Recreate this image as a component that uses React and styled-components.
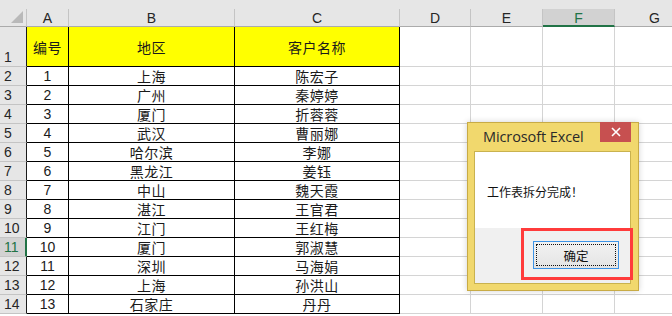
import React from "react";
import styled, { createGlobalStyle, css } from "styled-components";

const GlobalStyle = createGlobalStyle`
  html, body {
    margin: 0;
    padding: 0;
    background: #ffffff;
  }
  body {
    font-family: "Liberation Sans", "Noto Sans CJK SC", sans-serif;
  }
`;

const Page = styled.div`
  position: relative;
  width: 672px;
  height: 316px;
  overflow: hidden;
  background: #ffffff;
`;

const Sheet = styled.div`
  display: grid;
  grid-template-columns: 27px 42px 166px 165px 71px 72px 72px 80px;
  grid-template-rows: 9px 18px 40px repeat(13, 19px);
`;

const TopStrip = styled.div`
  grid-column: 1 / -1;
  background: #e6e6e6;
`;

const Corner = styled.div`
  position: relative;
  background: #e6e6e6;
  border-right: 1px solid #c4c4c4;
  border-bottom: 1px solid #ababab;
  box-sizing: border-box;

  &::after {
    content: "";
    position: absolute;
    right: 3px;
    bottom: 3px;
    width: 12px;
    height: 12px;
    background: #b9b9b9;
    clip-path: polygon(100% 0, 100% 100%, 0 100%);
  }
`;

const ColHeader = styled.div`
  box-sizing: border-box;
  background: ${(p) => (p.$selected ? "#d2d2d2" : "#e6e6e6")};
  border-right: 1px solid #c4c4c4;
  border-bottom: ${(p) => (p.$selected ? "2px solid #217346" : "1px solid #ababab")};
  color: ${(p) => (p.$selected ? "#217346" : "#262626")};
  font-size: 14px;
  display: flex;
  align-items: center;
  justify-content: center;
  line-height: 1;
  padding-top: 1px;
`;

const RowHeader = styled.div`
  box-sizing: border-box;
  background: ${(p) => (p.$selected ? "#d2d2d2" : "#e6e6e6")};
  border-bottom: 1px solid #c4c4c4;
  border-right: ${(p) => (p.$selected ? "2px solid #217346" : "1px solid #1a1a1a")};
  color: ${(p) => (p.$selected ? "#217346" : "#262626")};
  font-size: 14px;
  display: flex;
  align-items: ${(p) => (p.$tall ? "flex-end" : "center")};
  padding-left: 4px;
  padding-bottom: ${(p) => (p.$tall ? "2px" : "0")};
  line-height: 1;
`;

const Cell = styled.div`
  box-sizing: border-box;
  display: flex;
  align-items: center;
  justify-content: center;
  font-size: 14px;
  line-height: 1;
  color: #1a1a1a;
  white-space: nowrap;
  ${(p) =>
    p.$table
      ? css`
          border-right: 1px solid #000;
          border-bottom: 1px solid #000;
        `
      : css`
          border-right: 1px solid #d4d4d4;
          border-bottom: 1px solid #d4d4d4;
        `}
  ${(p) =>
    p.$head &&
    css`
      background: #ffff00;
    `}
`;

const CjkText = styled.span`
  font-family: "Noto Sans CJK SC", sans-serif;
  font-size: 14px;
  letter-spacing: 0.5px;
`;

const Dialog = styled.div`
  position: absolute;
  left: 467px;
  top: 122px;
  width: 172px;
  height: 169px;
  box-sizing: border-box;
  background: #f1d86d;
  border: 1px solid #c8ab45;
  box-shadow: 0 0 6px rgba(0, 0, 0, 0.18);
  display: flex;
  flex-direction: column;
  padding: 0 7px 6px 6px;
`;

const TitleBar = styled.div`
  height: 28px;
  display: flex;
  align-items: flex-start;
  justify-content: space-between;
`;

const Title = styled.div`
  font-family: "Open Sans", "Liberation Sans", sans-serif;
  font-size: 14.5px;
  color: #2a2a2a;
  padding: 4px 0 0 9px;
  letter-spacing: -0.1px;
`;

const CloseButton = styled.div`
  width: 31px;
  height: 20px;
  background: #c75050;
  display: flex;
  align-items: center;
  justify-content: center;
  margin-top: -1px;
  margin-right: 0px;
`;

const Inner = styled.div`
  flex: 1;
  display: flex;
  flex-direction: column;
  border: 1px solid #c9b24f;
  background: #f0f0f0;
`;

const Message = styled.div`
  height: 76px;
  background: #ffffff;
  display: flex;
  align-items: center;
  padding: 0 0 0 12px;
  font-family: "Noto Sans CJK SC", sans-serif;
  font-size: 12px;
  color: #111;
  padding-top: 2px;
  box-sizing: border-box;
`;

const Footer = styled.div`
  flex: 1;
  display: flex;
  justify-content: flex-end;
  align-items: flex-start;
  margin-right: -3px;
`;

const Highlight = styled.div`
  width: 112px;
  height: 52px;
  box-sizing: border-box;
  border: 3px solid #ff3b3b;
  display: flex;
  align-items: center;
  justify-content: center;
  padding-right: 2px;
`;

const OkButton = styled.button`
  width: 86px;
  height: 28px;
  box-sizing: border-box;
  border: 1px solid #3c93e6;
  background: linear-gradient(#f2f2f2, #e4e4e4);
  outline: 1px dotted #111;
  outline-offset: -4px;
  font-family: "Noto Sans CJK SC", sans-serif;
  font-size: 12.5px;
  color: #111;
  padding: 0;
  margin-top: 2px;
`;

const rows = [
  [1, "上海", "陈宏子"],
  [2, "广州", "秦婷婷"],
  [3, "厦门", "折蓉蓉"],
  [4, "武汉", "曹丽娜"],
  [5, "哈尔滨", "李娜"],
  [6, "黑龙江", "姜钰"],
  [7, "中山", "魏天霞"],
  [8, "湛江", "王官君"],
  [9, "江门", "王红梅"],
  [10, "厦门", "郭淑慧"],
  [11, "深圳", "马海娟"],
  [12, "上海", "孙洪山"],
  [13, "石家庄", "丹丹"],
];

const columns = ["A", "B", "C", "D", "E", "F", "G"];
const blanks = ["D", "E", "F", "G"];

export default function App() {
  return (
    <>
      <GlobalStyle />
      <Page>
        <Sheet>
          <TopStrip />
          <Corner />
          {columns.map((c) => (
            <ColHeader key={c} $selected={c === "F"}>
              {c}
            </ColHeader>
          ))}

          <RowHeader $tall>1</RowHeader>
          <Cell $table $head>
            <CjkText>编号</CjkText>
          </Cell>
          <Cell $table $head>
            <CjkText>地区</CjkText>
          </Cell>
          <Cell $table $head>
            <CjkText>客户名称</CjkText>
          </Cell>
          {blanks.map((b) => (
            <Cell key={b} />
          ))}

          {rows.map(([n, area, name], i) => (
            <React.Fragment key={n}>
              <RowHeader $selected={i + 2 === 11}>{i + 2}</RowHeader>
              <Cell $table>{n}</Cell>
              <Cell $table>
                <CjkText>{area}</CjkText>
              </Cell>
              <Cell $table>
                <CjkText>{name}</CjkText>
              </Cell>
              {blanks.map((b) => (
                <Cell key={b} />
              ))}
            </React.Fragment>
          ))}
        </Sheet>

        <Dialog>
          <TitleBar>
            <Title>Microsoft Excel</Title>
            <CloseButton>
              <svg width="10" height="10" viewBox="0 0 10 10">
                <path d="M1 1 L9 9 M9 1 L1 9" stroke="#fff" strokeWidth="1.6" />
              </svg>
            </CloseButton>
          </TitleBar>
          <Inner>
            <Message>工作表拆分完成！</Message>
            <Footer>
              <Highlight>
                <OkButton>确定</OkButton>
              </Highlight>
            </Footer>
          </Inner>
        </Dialog>
      </Page>
    </>
  );
}
